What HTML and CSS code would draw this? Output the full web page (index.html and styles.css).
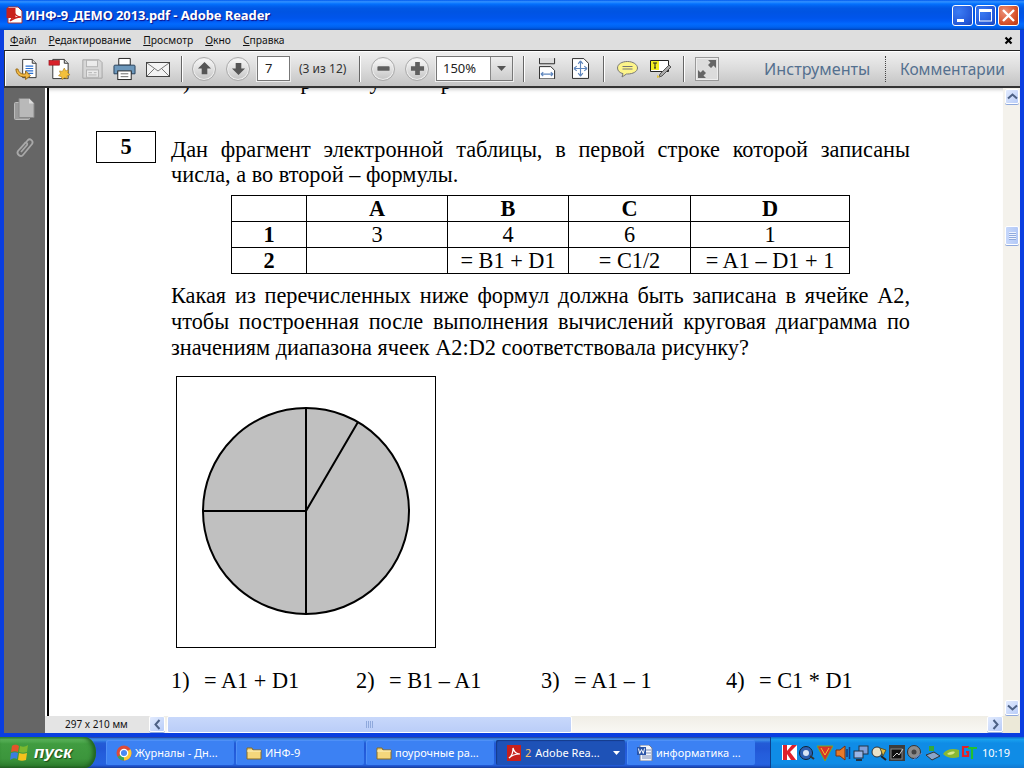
FILE: index.html
```html
<!DOCTYPE html>
<html lang="ru">
<head>
<meta charset="utf-8">
<title>ИНФ-9_ДЕМО 2013.pdf - Adobe Reader</title>
<link rel="stylesheet" href="styles.css">
</head>
<body>
<div class="window">
  <header class="titlebar">
    <svg class="app-icon" width="18" height="18" viewBox="0 0 18 18"><path d="M2 1h10l4 4v12H2z" fill="#fff" stroke="#a33" stroke-width="1"/><rect x="0.500" y="2" width="9" height="10" fill="#c8201c"/><path d="M4 15c2-2 4-7 3-10 2 4 4 6 8 6-4 0-7 1-11 4z" fill="none" stroke="#c8201c" stroke-width="1.300"/></svg>
    <span class="title-text">ИНФ-9_ДЕМО 2013.pdf - Adobe Reader</span>
    <div class="caption-buttons">
      <span class="cap cap-blue"><svg width="21" height="21" viewBox="0 0 21 21"><rect x="5" y="14" width="7" height="3" fill="#fff"/></svg></span>
      <span class="cap cap-blue"><svg width="21" height="21" viewBox="0 0 21 21"><rect x="4.500" y="5" width="12" height="11" fill="none" stroke="#fff"/><rect x="4" y="4" width="13" height="3" fill="#fff"/></svg></span>
      <span class="cap cap-red"><svg width="21" height="21" viewBox="0 0 21 21"><path d="M5 5l11 11M16 5L5 16" stroke="#fff" stroke-width="2.400"/></svg></span>
    </div>
  </header>
  <div class="frame">
    <nav class="menubar">
      <span><u>Ф</u>айл</span><span><u>Р</u>едактирование</span><span><u>П</u>росмотр</span><span><u>О</u>кно</span><span><u>С</u>правка</span>
      <svg class="menu-close" width="9" height="9" viewBox="0 0 9 9"><path d="M1.500 1.500l6 6M7.500 1.500l-6 6" stroke="#000" stroke-width="2.200"/></svg>
    </nav>
    <div class="toolbar">
      <svg class="i24 first" viewBox="0 0 24 24"><path d="M8 2h10l4 4v15H8z" fill="#fff" stroke="#333"/><path d="M18 2v4h4" fill="#ddd" stroke="#333"/><path d="M11 9h8M11 11.500h8M11 14h8M11 16.500h8" stroke="#2a6fd0" stroke-width="1.200"/><path d="M1 12c0 6 5 9 10 8v3l5-4-5-5v3c-4 1-7-1-8-5z" fill="#f1b843" stroke="#9a6a14"/></svg>
      <svg class="i24" viewBox="0 0 24 24"><path d="M5 2h12l4 4v16H5z" fill="#fff" stroke="#333"/><path d="M17 2v4h4" fill="#ddd" stroke="#333"/><rect x="1" y="3" width="11" height="5" fill="#d8202a" stroke="#8a1018" stroke-width=".6"/><path d="M17 11l1.500 3 3-1-1 3 2.500 2-3 1v3l-3-1-2 2-1-3-3-1 2-2-1-3 3 .5z" fill="#f3c03c" stroke="#a87a14" stroke-width=".6"/></svg>
      <svg class="i24 save faded" viewBox="0 0 24 24"><path d="M2 2h18l3 3v17H2z" fill="#d6d6d6" stroke="#999"/><rect x="6" y="2.500" width="12" height="7" fill="#eee" stroke="#aaa"/><rect x="6" y="13" width="13" height="8" fill="#eee" stroke="#aaa"/><path d="M8 16h4M14 16h3M8 18.500h9" stroke="#aaa"/></svg>
      <svg class="i24" viewBox="0 0 24 24"><path d="M6 1h12v7H6z" fill="#fff" stroke="#222"/><path d="M2 8h20a1 1 0 011 1v8h-4v-2H5v2H1V9a1 1 0 011-1z" fill="#6c97bb" stroke="#26405a"/><rect x="5" y="14" width="14" height="9" fill="#fff" stroke="#222"/><path d="M8 17h8M8 20h8" stroke="#666"/></svg>
      <svg class="i24 mail" viewBox="0 0 24 24"><rect x=".5" y="5.500" width="23" height="14" fill="#f4f4f4" stroke="#444"/><path d="M1 6l11 8 11-8M1 19l8-8M23 19l-8-8" fill="none" stroke="#777"/></svg>
      <i class="sep s1"></i>
      <span class="round"><svg viewBox="0 0 16 16"><path d="M8 1l7 7h-4v6H5V8H1z" fill="#565656"/></svg></span>
      <span class="round"><svg viewBox="0 0 16 16"><path d="M8 15l7-7h-4V2H5v6H1z" fill="#565656"/></svg></span>
      <span class="page-input">7</span>
      <span class="page-count">(3 из 12)</span>
      <i class="sep s2"></i>
      <span class="round"><svg viewBox="0 0 16 16"><rect x="1.500" y="5.500" width="13" height="5" rx="1" fill="#5f5f5f"/></svg></span>
      <span class="round"><svg viewBox="0 0 16 16"><path d="M5.500 1h5v4.500H15v5h-4.500V15h-5v-4.500H1v-5h4.500z" fill="#5f5f5f"/></svg></span>
      <span class="combo"><span class="combo-value">150%</span><span class="combo-drop"><svg width="9" height="5" viewBox="0 0 9 5"><path d="M0 0h9L4.500 5z" fill="#555"/></svg></span></span>
      <i class="sep s3"></i>
      <svg class="fit fit-width" viewBox="0 0 18 22"><path d="M.5 0v6h16V0" fill="#ddd" stroke="#222"/><path d="M.5 9h12l4 4v9H.5z" fill="#fff" stroke="#222"/><path d="M2 17h13M2 17l2.500-2M2 17l2.500 2M15 17l-2.500-2M15 17l-2.500 2" fill="none" stroke="#5f86bd" stroke-width="1.200"/></svg>
      <svg class="fit fit-page" viewBox="0 0 18 22"><path d="M.5.500h12l5 5v16H.500z" fill="#fff" stroke="#222"/><path d="M9 3v16M2 11h14M9 3L6.500 6M9 3l2.500 3M9 19l-2.500-3M9 19l2.500-3M2 11l3-2.500M2 11l3 2.500M16 11l-3-2.500M16 11l-3 2.500" fill="none" stroke="#5f86bd" stroke-width="1.200"/></svg>
      <i class="sep s4"></i>
      <svg class="note" viewBox="0 0 21 17"><path d="M10.500 1C5 1 .5 3.500.5 7.500c0 3 2.500 5 5.500 5.600L5 16.500l4.500-3h1c5.500 0 10-2.500 10-6s-4.500-6.500-10-6.500z" fill="#fdf58a" stroke="#777"/><path d="M5.500 6h10M5.500 8.500h10" stroke="#777"/></svg>
      <svg class="note note-t" viewBox="0 0 21 18"><path d="M.5.500h18v11H.5z" fill="#fff" stroke="#222"/><rect x="1" y="1" width="8" height="9" fill="#f5f020"/><path d="M3 3h4M5 3v5M4 8h2" stroke="#222"/><path d="M19 5l2 2-9 9-3 1 1-3z" fill="#aaa" stroke="#555"/><path d="M7 15l3 2-3 1z" fill="#e6c53a"/></svg>
      <i class="sep s5"></i>
      <span class="expand"><svg width="20" height="20" viewBox="0 0 20 20"><path d="M11 1h8v8l-2.500-2.500L14 9l-3-3 2.500-2.500zM1 11l2.500 2.500L6 11l3 3-2.500 2.500L9 19H1z" fill="#666"/></svg></span>
      <span class="pane-link tools">Инструменты</span>
      <span class="pane-link comments">Комментарии</span>
    </div>
    <div class="main">
      <aside class="sidebar">
        <svg class="side-pages" width="22" height="22" viewBox="0 0 22 22"><rect x=".5" y="4.500" width="15" height="17" rx="1" fill="#9a9a9a" stroke="#bbb"/><path d="M5 .5h10l5 5v14H5z" fill="#b9b9b9" stroke="#888"/><path d="M15 .5v5h5" fill="#ddd"/></svg>
        <svg class="side-clip" width="22" height="24" viewBox="0 0 22 24"><path d="M6 13l8-9c2-2 6 1 4 4L9 19c-2 3-7-1-5-4l7-8c1-1 3 0 2 2l-6 7" fill="none" stroke="#a8a8a8" stroke-width="1.800"/></svg>
      </aside>
      <div class="viewport">
        <article class="page">
          <div class="clipped"><p class="clipped-text"><span>)</span><span class="g1">р</span><span class="g2">у</span><span class="g3">р</span></p></div>
          <div class="task">
            <div class="task-no">5</div>
            <p class="para">Дан фрагмент электронной таблицы, в первой строке которой записаны числа, а во второй – формулы.</p>
          </div>
          <table class="sheet">
            <colgroup><col class="c0"><col class="c1"><col class="c2"><col class="c3"><col class="c4"></colgroup>
            <tr class="head"><th></th><th>A</th><th>B</th><th>C</th><th>D</th></tr>
            <tr><th>1</th><td>3</td><td>4</td><td>6</td><td>1</td></tr>
            <tr><th>2</th><td></td><td>= B1 + D1</td><td>= C1/2</td><td>= A1 – D1 + 1</td></tr>
          </table>
          <p class="para question">Какая из перечисленных ниже формул должна быть записана в ячейке A2, чтобы построенная после выполнения вычислений круговая диаграмма по значениям диапазона ячеек A2:D2 соответствовала рисунку?</p>
          <svg class="chart" width="260" height="272" viewBox="0 0 260 272">
            <rect x=".5" y=".5" width="259" height="271" fill="#fff" stroke="#000"/>
            <circle cx="130" cy="135" r="103" fill="#c0c0c0" stroke="#000" stroke-width="2"/>
            <path d="M130 32v206M130 135H27M130 135L182 46" fill="none" stroke="#000" stroke-width="2"/>
          </svg>
          <div class="options">
            <div class="option"><span class="num">1)</span><span>= A1 + D1</span></div>
            <div class="option"><span class="num">2)</span><span>= B1 – A1</span></div>
            <div class="option"><span class="num">3)</span><span>= A1 – 1</span></div>
            <div class="option"><span class="num">4)</span><span>= C1 * D1</span></div>
          </div>
        </article>
      </div>
      <div class="vscroll">
        <span class="sbtn"><svg width="11" height="7" viewBox="0 0 11 7"><path d="M1 5.500l4.500-4 4.500 4" fill="none" stroke="#4d6185" stroke-width="2"/></svg></span>
        <span class="vthumb"><i></i><i></i><i></i><i></i></span>
        <span class="grow"></span>
        <span class="sbtn"><svg width="11" height="7" viewBox="0 0 11 7"><path d="M1 1.500l4.500 4 4.500-4" fill="none" stroke="#4d6185" stroke-width="2"/></svg></span>
      </div>
    </div>
    <div class="status">
      <span class="size">297 x 210 мм</span>
      <div class="hscroll">
        <span class="sbtn h"><svg width="7" height="11" viewBox="0 0 7 11"><path d="M5.500 1l-4 4.500 4 4.500" fill="none" stroke="#4d6185" stroke-width="2"/></svg></span>
        <span class="hthumb"><i></i><i></i><i></i><i></i></span>
        <span class="grow"></span>
        <span class="sbtn h"><svg width="7" height="11" viewBox="0 0 7 11"><path d="M1.500 1l4 4.500-4 4.500" fill="none" stroke="#4d6185" stroke-width="2"/></svg></span>
      </div>
      <span class="corner"></span>
    </div>
  </div>
</div>
<footer class="taskbar">
  <div class="start">
    <svg width="20" height="19" viewBox="0 0 20 19"><path d="M2 3c3-2 5-1 7 0L8 9C6 8 4 8 1 9z" fill="#e5542a"/><path d="M10 3c3 1 5 1 8-1l-1 7c-3 1-5 1-8 0z" fill="#7cb82f"/><path d="M1 10c3-1 5-1 7 0l-1 6c-2-1-4-1-7 1z" fill="#3d7de0"/><path d="M9 10c3 1 5 1 8 0l-1 7c-3 1-5 1-8 0z" fill="#f4c21c"/></svg>
    <span>пуск</span>
  </div>
  <div class="tasks">
    <div class="task-btn"><svg width="16" height="16" viewBox="0 0 16 16"><circle cx="8" cy="8" r="7.500" fill="#dd4b39"/><path d="M8 8L1.500 11.800A7.500 7.500 0 008 15.500z" fill="#3aa757"/><path d="M8 8l6.500-3.700A7.500 7.500 0 018 15.500z" fill="#fcc934"/><circle cx="8" cy="8" r="3.700" fill="#4a8af4" stroke="#fff" stroke-width="1.300"/></svg><span>Журналы - Дн...</span></div>
    <div class="task-btn"><svg width="16" height="14" viewBox="0 0 16 14"><path d="M1 2h5l1 2h8v9H1z" fill="#f5d67c" stroke="#8a6a22"/><path d="M1 5h14" stroke="#fff3c4"/></svg><span>ИНФ-9</span></div>
    <div class="task-btn"><svg width="16" height="14" viewBox="0 0 16 14"><path d="M1 2h5l1 2h8v9H1z" fill="#f5d67c" stroke="#8a6a22"/><path d="M1 5h14" stroke="#fff3c4"/></svg><span>поурочные ра...</span></div>
    <div class="task-btn active"><svg width="16" height="16" viewBox="0 0 16 16"><rect x="1" y="0" width="14" height="16" fill="#c8201c"/><path d="M3 13c3-2 4-6 4-10 1 4 3 6 7 6-4 0-8 1-11 4z" fill="none" stroke="#fff" stroke-width="1.200"/></svg><b>2</b><span>Adobe Rea...</span><svg class="caret" width="7" height="4" viewBox="0 0 7 4"><path d="M0 0h7L3.500 4z" fill="#fff"/></svg></div>
    <div class="task-btn"><svg width="16" height="16" viewBox="0 0 16 16"><path d="M3 0h9l3 3v13H3z" fill="#f4f6fb" stroke="#6d7a99"/><path d="M9 5h5M9 8h5M5 11h9M5 13h9" stroke="#7a8db8"/><rect x="0" y="2" width="9" height="8" fill="#2a55a8"/><path d="M1.500 3.500l1.200 5 1.800-4 1.800 4 1.200-5" fill="none" stroke="#fff"/></svg><span>информатика ...</span></div>
  </div>
  <div class="tray">
    <svg width="15" height="15" viewBox="0 0 15 15"><rect width="15" height="15" fill="#fff"/><path d="M1 0h4v6l5-6h5L8 7l6 8H9L5 9v6H1z" fill="#e0202a"/></svg>
    <svg width="16" height="16" viewBox="0 0 16 16"><circle cx="7" cy="8" r="6.500" fill="#2d5fb0" stroke="#123"/><circle cx="7" cy="8" r="3" fill="#d8e4f4"/><path d="M11 11l4 3" stroke="#333" stroke-width="2"/></svg>
    <svg width="16" height="16" viewBox="0 0 16 16"><path d="M0 1h16L8 16z" fill="#d8312a" stroke="#7a2"/><path d="M4 3l4 7 4-7" fill="none" stroke="#f2c230"/></svg>
    <svg width="16" height="16" viewBox="0 0 16 16"><path d="M1 5h4l5-4v14l-5-4H1z" fill="#e77a2a" stroke="#7a3010"/><path d="M12 4v8M14.500 2v12" stroke="#123a80" stroke-width="1.500"/></svg>
    <svg width="16" height="16" viewBox="0 0 16 16"><rect x="6" y="1" width="9" height="8" fill="#7f9fd8" stroke="#234"/><rect x="1" y="6" width="9" height="7" fill="#9ab6e6" stroke="#234"/><path d="M3 15h6" stroke="#234" stroke-width="2"/></svg>
    <svg width="16" height="16" viewBox="0 0 16 16"><circle cx="6" cy="7" r="5" fill="#e8e2c8" stroke="#333"/><path d="M9 3l6 2-3 6z" fill="#e3b93a" stroke="#553"/><path d="M10 11l5 4" stroke="#222" stroke-width="2"/></svg>
    <svg width="16" height="16" viewBox="0 0 16 16"><rect width="16" height="16" fill="#3c3c3c"/><rect x="2" y="4" width="11" height="10" fill="#111" stroke="#888"/><path d="M4 12l4-4 2 2 4-6" fill="none" stroke="#ccc"/></svg>
    <svg width="16" height="16" viewBox="0 0 16 16"><circle cx="7" cy="7" r="6.500" fill="#8c8c8c" stroke="#333"/><circle cx="7" cy="7" r="2.500" fill="#444"/><path d="M6 15l9-7" stroke="#5f86d8"/></svg>
    <svg width="16" height="16" viewBox="0 0 16 16"><path d="M4 1h5v5H4z" fill="#36a83a"/><path d="M1 10l8-3 6 4-8 4z" fill="#8ba4c8" stroke="#333"/></svg>
    <svg width="16" height="16" viewBox="0 0 16 16"><path d="M0 9c3-5 10-6 16-4v7c-6 2-12 1-16-3z" fill="#8ab832"/><path d="M4 9c2-2 5-3 8-2-1 2-4 4-8 2z" fill="#d8e88a"/></svg>
    <svg width="16" height="16" viewBox="0 0 16 16"><path d="M8 2H2v9h5V7H5" fill="none" stroke="#e0202a" stroke-width="2.200"/><path d="M7 3h9M11 3v11" stroke="#22c030" stroke-width="2.200"/></svg>
    <span class="clock">10:19</span>
  </div>
</footer>
</body>
</html>
```
FILE: styles.css
```css
* { box-sizing: border-box; }
html, body { margin: 0; height: 100%; overflow: hidden; }
body { width: 1024px; height: 768px; display: flex; flex-direction: column; background: #0831d9; font-family: "Noto Sans", "Liberation Sans", sans-serif; }
svg { display: block; flex: none; }

.window { height: 737px; display: flex; flex-direction: column; background: #0a3ee0; flex: none; }
.titlebar { height: 30px; flex: none; display: flex; align-items: center; padding: 0 5px 0 6px; background: linear-gradient(180deg,#0058ee 0,#3593ff 6%,#127dff 10%,#036ffc 14%,#0262ee 20%,#0057e5 28%,#0054e3 40%,#0055eb 60%,#005bf5 70%,#026afe 80%,#0062ef 90%,#0052d6 96%,#0040ab 100%); }
.title-text { margin-left: 1px; color: #fff; font: bold 13px "Noto Sans", sans-serif; letter-spacing: -.1px; text-shadow: 1px 1px 1px #0f1089; white-space: nowrap; }
.caption-buttons { margin-left: auto; display: flex; gap: 2px; }
.cap { width: 21px; height: 21px; border: 1px solid #fff; border-radius: 3px; display: block; overflow: hidden; }
.cap svg { margin: -1px; }
.cap-blue { background: radial-gradient(circle at 30% 30%, #3c7cf4, #2458d8 70%, #1a42b8); }
.cap-red { background: radial-gradient(circle at 30% 30%, #ec9078, #d8532c 60%, #b83510); }

.frame { flex: 1; min-height: 0; margin: 0 4px 4px; display: flex; flex-direction: column; background: #dcdcdc; }
.menubar { height: 20px; flex: none; display: flex; align-items: center; padding-left: 6px; gap: 12px; font: 10.300px "Noto Sans", sans-serif; color: #111; background: #dedede; }
.menu-close { margin-left: auto; margin-right: 7px; }

.toolbar { height: 38px; flex: none; display: flex; align-items: center; border: solid #333; border-width: 1px 0 2px 1px; border-top-color: #222; background: linear-gradient(#f0f0f0, #dcdcdc 50%, #c4c4c4); box-shadow: inset 1px 1px 0 #fff; }
.i24 { width: 23px; height: 24px; margin-right: 10px; }
.i24.first { margin-left: 10px; }
.i24.save { width: 22px; }
.i24.mail { width: 24px; margin-right: 11px; }
.faded { opacity: .85; }
.sep { width: 1px; height: 26px; background: #666; border-right: 1px solid #fff; box-sizing: content-box; }
.s1 { margin: 0 9px 0 0; }
.s2 { margin: 0 10px 0 10px; }
.s3 { margin: 0 14px 0 10px; }
.s4 { margin: 0 12px 0 14px; }
.s5 { margin: 0 10px 0 12px; }
.round { width: 24px; height: 24px; margin-right: 10px; border-radius: 50%; border: 1px solid #aaa; background: linear-gradient(#fafafa, #c4c4c4); display: flex; align-items: center; justify-content: center; box-shadow: inset 0 0 0 1px #eee; }
.round svg { width: 15px; height: 15px; }
.page-input { width: 33px; height: 25px; margin-left: -3px; background: #fff; border: 1px solid #777; box-shadow: 0 0 0 1px #eee; font-size: 13px; line-height: 23px; padding-left: 7px; color: #222; }
.page-count { margin-left: 9px; width: 50px; font-size: 12px; color: #333; white-space: nowrap; }
.combo { width: 77px; height: 25px; margin-left: -3px; display: flex; background: #fff; border: 1px solid #777; box-shadow: 0 0 0 1px #eee; }
.combo-value { width: 54px; font-size: 13px; line-height: 23px; padding-left: 6px; color: #222; border-right: 1px solid #888; }
.combo-drop { flex: 1; background: linear-gradient(#eee, #ccc); display: flex; align-items: center; justify-content: center; }
.fit { width: 17px; height: 21px; }
.fit-page { margin-left: 16px; }
.note { width: 21px; height: 18px; }
.note-t { margin-left: 12px; }
.expand { width: 24px; height: 24px; border: 1px solid #999; background: #dcdcdc; box-shadow: inset 0 0 0 1px #eee; display: flex; align-items: center; justify-content: center; }
.pane-link { font: 15.500px "Noto Sans", sans-serif; color: #54708f; white-space: nowrap; height: 26px; line-height: 26px; }
.tools { margin-left: 45px; width: 122px; border-right: 1px dotted #444; font-size: 16.200px; }
.comments { margin-left: 14px; }

.main { flex: 1; min-height: 0; display: flex; background: #fff; }
.sidebar { width: 41px; flex: none; background: #666; display: flex; flex-direction: column; align-items: center; padding: 10px 0 0 1px; gap: 16px; }
.viewport { flex: 1; min-width: 0; overflow: hidden; border-left: 2px solid #000; box-shadow: inset 0 5px 4px -4px #bbb; margin-left: 2px; }
.page { font: 22.300px/26px "Liberation Serif", serif; color: #000; }
.clipped { height: 6px; overflow: hidden; }
.clipped-text { margin: -19px 0 0 134px; display: flex; white-space: nowrap; }
.g1 { margin-left: 110px; }
.g2 { margin-left: 58px; }
.g3 { margin-left: 60px; }
.task { margin-top: 37px; padding-left: 47px; display: flex; align-items: flex-start; }
.task-no { width: 60px; height: 32px; flex: none; border: 1px solid #000; text-align: center; font-weight: bold; line-height: 30px; }
.para { margin: 0; text-align: justify; line-height: 26px; }
.task .para { width: 739px; margin: 6px 0 0 15px; line-height: 25px; }
.sheet { margin: 8px 0 0 182px; width: 619px; height: 79px; border-collapse: collapse; table-layout: fixed; }
.sheet th, .sheet td { border: 1px solid #000; padding: 1px 0 0; text-align: center; line-height: 24px; height: 26px; }
.c0 { width: 75px; } .c1 { width: 141px; } .c2 { width: 121px; } .c3 { width: 122px; } .c4 { width: 159px; }
.question { width: 739px; margin: 9px 0 0 122px; }
.chart { margin: 15px 0 0 127px; }
.options { margin: 20px 0 0 122px; display: flex; }
.option { width: 185px; display: flex; }
.num { width: 33px; }

.vscroll { width: 17px; flex: none; display: flex; flex-direction: column; background: #f4f2ec; padding: 1px 1px 1px 2px; }
.sbtn { width: 14px; height: 15px; flex: none; display: flex; align-items: center; justify-content: center; border: 1px solid #fff; border-radius: 2px; background: linear-gradient(135deg,#e2ebfe,#b9cdf8); box-shadow: 0 1px 0 #8fa9dc; }
.sbtn.h { width: 16px; height: 16px; }
.vthumb { width: 14px; height: 19px; margin-top: 122px; display: flex; flex-direction: column; align-items: center; justify-content: center; gap: 1px; border: 1px solid #fff; border-radius: 2px; background: linear-gradient(90deg,#c6d7fb,#b3c9f6); box-shadow: 0 1px 0 #8fa9dc; }
.vthumb i { width: 7px; height: 1px; background: #eef3fe; box-shadow: 0 1px 0 #8fa9dc; }
.grow { flex: 1; }

.status { height: 17px; flex: none; display: flex; background: #e4e4e4; }
.size { width: 104px; padding-left: 20px; font: 10px/17px "Noto Sans", sans-serif; color: #111; margin-left: 41px; background: #e4e4e4; box-shadow: -41px 0 0 #666; }
.hscroll { flex: 1; display: flex; background: linear-gradient(#f0eee6, #f9f8f4); }
.hthumb { width: 405px; margin-left: 2px; display: flex; align-items: center; justify-content: center; gap: 1px; border: 1px solid #fff; border-radius: 2px; background: linear-gradient(#c8d8fb,#bacdf8); }
.hthumb i { width: 1px; height: 7px; background: #8fa9dc; }
.corner { width: 17px; background: #ece9d8; }

.taskbar { height: 31px; flex: none; display: flex; background: linear-gradient(#1f2f86 0,#3165c4 3%,#3682e5 6%,#4490e6 10%,#3883e5 12%,#2b71e0 15%,#2663da 18%,#235bd6 20%,#2157d6 38%,#245ddb 54%,#2562df 86%,#245fdc 89%,#2158d4 92%,#1d4ec0 95%,#1941a5 98%); }
.start { width: 96px; display: flex; align-items: center; gap: 4px; padding-left: 10px; border-radius: 0 12px 12px 0 / 0 16px 16px 0; background: linear-gradient(#388e38 0,#5cb45c 8%,#409c40 22%,#3c953c 70%,#2f7f2f 92%,#235f23 100%); box-shadow: inset -3px 0 4px #1f5f1f; }
.start span { color: #fff; font: italic bold 17px "Liberation Sans", sans-serif; text-shadow: 1px 1px 1px #1a4a1a; }
.tasks { margin-left: 10px; width: 649px; display: flex; gap: 2px; padding-top: 2px; }
.task-btn { width: 128px; height: 25px; margin-top: 1px; display: flex; align-items: center; gap: 3px; padding-left: 10px; border-radius: 2px; color: #fff; font: 11px "Noto Sans", sans-serif; white-space: nowrap; background: #3c81f3; box-shadow: inset 1px 1px 0 #4f90f6; }
.task-btn.active { background: #1e52b7; box-shadow: inset 1px 1px 1px #153b8a; width: 129px; }
.task-btn b { font-weight: normal; color: #f8c06a; margin-right: 1px; }
.caret { margin-left: 10px; }
.tray { margin-left: 15px; flex: 1; display: flex; align-items: center; padding-left: 11px; background: linear-gradient(#0e6bc8 0,#18a0ee 8%,#0f8ce6 20%,#0f8ce6 85%,#1278d0 100%); border-left: 1px solid #0d3f8c; }
.tray svg { margin-right: 2px; }
.clock { margin-left: 3px; color: #fff; font: 11px "Noto Sans", sans-serif; }
```
